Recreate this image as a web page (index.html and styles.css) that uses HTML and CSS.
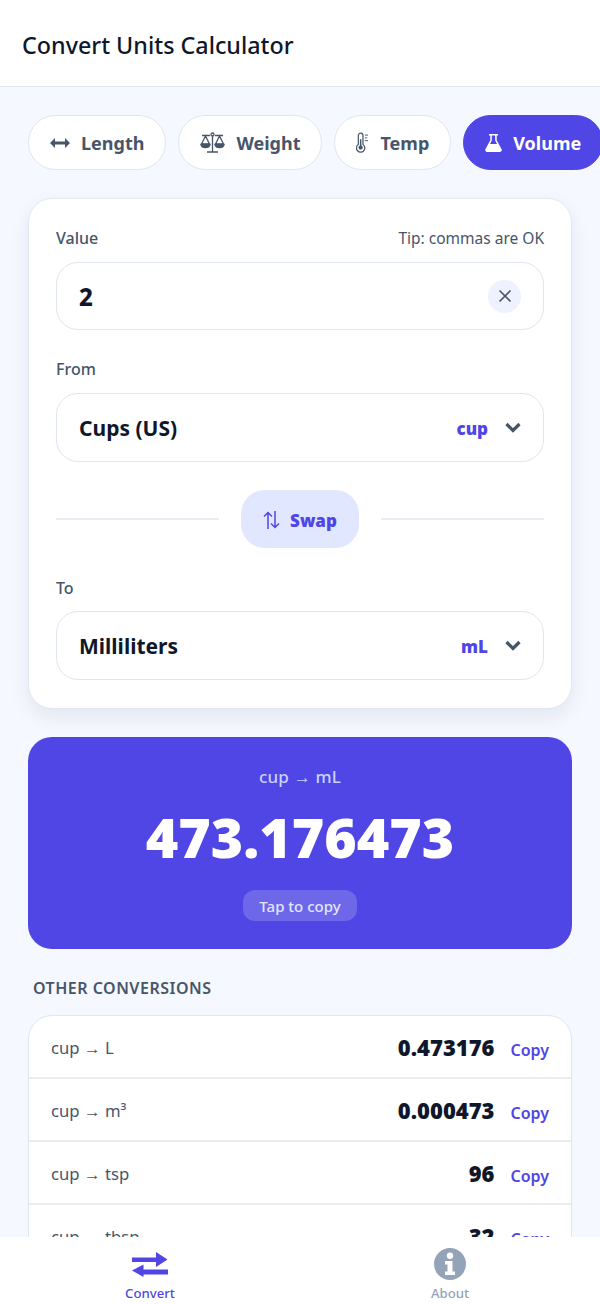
FILE: index.html
```html
<!DOCTYPE html>
<html lang="en">
<head>
    <meta charset="UTF-8" />
    <meta name="viewport" content="width=device-width, initial-scale=1" />
    <title>Convert Units Calculator</title>
    <link rel="stylesheet" href="styles.css">
</head>
<body>
    <div class="app">
        <header class="topbar">
            <h1>Convert Units Calculator</h1>
        </header>

        <main class="content">
            <div class="tabs">
                <a href="#" class="tab">
                    <svg class="tab-icon" width="20" height="12" viewBox="0 0 20 12" fill="currentColor"><path d="M0 6l5-5v3.600h10V1l5 5-5 5V7.400H5V11z"/></svg>
                    Length
                </a>
                <a href="#" class="tab">
                    <svg class="tab-icon" width="25" height="21" viewBox="0 0 25 21" fill="none" stroke="currentColor" stroke-width="1.300"><path d="M12.500 3v16.500M7 20h11M2 3.500h8M15 3.500h8" /><circle cx="12.500" cy="2.500" r="1.500"/><path d="M5.500 4L1.500 12h8zM19.500 4L15.500 12h8z"/><path d="M1 12.500h9c-.4 2-2.200 3-4.500 3s-4.100-1-4.500-3zM15 12.500h9c-.4 2-2.200 3-4.500 3s-4.100-1-4.500-3z" fill="currentColor"/></svg>
                    Weight
                </a>
                <a href="#" class="tab">
                    <svg class="tab-icon" width="13" height="21" viewBox="0 0 14 21" fill="none" stroke="currentColor" stroke-width="1.300"><path d="M2.500 3a2.500 2.500 0 0 1 5 0v9.700a4.500 4.500 0 1 1-5 0z"/><circle cx="5" cy="16" r="2.300" fill="currentColor" stroke="none"/><path d="M5 7v8" stroke-width="1.600"/><path d="M9.500 2.500H13M9.500 5.500H12M9.500 8.500H13" stroke-width="1"/></svg>
                    Temp
                </a>
                <a href="#" class="tab tab-active">
                    <svg class="tab-icon" width="17" height="18" viewBox="0 0 17 18" fill="currentColor"><path d="M4 0h9v1.600h-1.300v4.600L16.500 15a2 2 0 0 1-1.800 3H2.300a2 2 0 0 1-1.800-3L5.300 6.200V1.600H4zM6.800 1.600v5L5 10h7l-1.800-3.400v-5z"/></svg>
                    Volume
                </a>
            </div>

            <section class="card">
                <div class="field-head">
                    <label>Value</label>
                    <span class="tip">Tip: commas are OK</span>
                </div>
                <div class="field field-value">
                    <span class="field-text value-text">2</span>
                    <button class="clear">
                        <svg width="14" height="14" viewBox="0 0 14 14" fill="none" stroke="currentColor" stroke-width="1.600"><path d="M1.500 1.500l11 11M12.500 1.500l-11 11"/></svg>
                    </button>
                </div>

                <div class="field-head field-head-from">
                    <label>From</label>
                </div>
                <div class="field">
                    <span class="field-text">Cups (US)</span>
                    <span class="unit">cup</span>
                    <svg class="chev" width="16" height="11" viewBox="0 0 16 11" fill="none" stroke="currentColor" stroke-width="3.200"><path d="M1.500 2l6.500 6.500L14.500 2"/></svg>
                </div>

                <div class="swap-row">
                    <div class="swap-line"></div>
                    <button class="swap">
                        <svg width="17" height="18" viewBox="0 0 17 18" fill="none" stroke="currentColor" stroke-width="1.500"><path d="M5 18V1.500M1 5.500L5 1.500l4 4M12 0v16.500M8 12.500l4 4 4-4"/></svg>
                        Swap
                    </button>
                    <div class="swap-line"></div>
                </div>

                <div class="field-head field-head-to">
                    <label>To</label>
                </div>
                <div class="field">
                    <span class="field-text">Milliliters</span>
                    <span class="unit">mL</span>
                    <svg class="chev" width="16" height="11" viewBox="0 0 16 11" fill="none" stroke="currentColor" stroke-width="3.200"><path d="M1.500 2l6.500 6.500L14.500 2"/></svg>
                </div>
            </section>

            <section class="result">
                <div class="result-label">cup → mL</div>
                <div class="result-value">473.176473</div>
                <button class="result-copy">Tap to copy</button>
            </section>

            <h2 class="section-title">OTHER CONVERSIONS</h2>
            <section class="list">
                <div class="row">
                    <span class="row-name">cup → L</span>
                    <span class="row-value">0.473176</span>
                    <a href="#" class="row-copy">Copy</a>
                </div>
                <div class="row">
                    <span class="row-name">cup → m³</span>
                    <span class="row-value">0.000473</span>
                    <a href="#" class="row-copy">Copy</a>
                </div>
                <div class="row">
                    <span class="row-name">cup → tsp</span>
                    <span class="row-value">96</span>
                    <a href="#" class="row-copy">Copy</a>
                </div>
                <div class="row">
                    <span class="row-name">cup → tbsp</span>
                    <span class="row-value">32</span>
                    <a href="#" class="row-copy">Copy</a>
                </div>
            </section>
        </main>

        <nav class="bottom-nav">
            <a href="#" class="nav-item nav-active">
                <svg width="36" height="32" viewBox="0 0 36 32" fill="currentColor"><path d="M0 9.500h24V4l11.500 7.500L24 19v-5H0z"/><path d="M36 22H11.500v-5L0 23l11.500 6.500V27H36z" transform="translate(0 -0.500)"/></svg>
                Convert
            </a>
            <a href="#" class="nav-item">
                <svg width="32" height="32" viewBox="0 0 32 32" fill="currentColor"><path fill-rule="evenodd" d="M16 0a16 16 0 1 1 0 32 16 16 0 0 1 0-32zM16 4.500a3.200 3.200 0 1 0 0 6.400 3.200 3.200 0 0 0 0-6.400zM11 13v3.500h2.500v7H11V27h10v-3.500h-2.500V13z"/></svg>
                About
            </a>
        </nav>
    </div>
</body>
</html>
```

FILE: styles.css
```css
* {
    margin: 0;
    padding: 0;
    box-sizing: border-box;
}

body {
    font-family: 'Noto Sans', 'Open Sans', sans-serif;
    background-color: #f5f8ff;
    color: #0f172a;
    overflow: hidden;
}

a {
    text-decoration: none;
    color: inherit;
}

button {
    font-family: inherit;
    border: none;
    cursor: pointer;
}

.app {
    height: 1304px;
    display: flex;
    flex-direction: column;
}

/* Top bar */
.topbar {
    height: 87px;
    flex-shrink: 0;
    background-color: #fff;
    border-bottom: 1px solid #e2e8f0;
    display: flex;
    align-items: center;
    padding: 3px 22px 0;
}

.topbar h1 {
    font-size: 23.3px;
    font-weight: 500;
    color: #0f172a;
}

/* Scrolling area */
.content {
    flex: 1;
    min-height: 0;
    overflow: hidden;
    padding: 28px 28px 0;
}

.tabs {
    display: flex;
    gap: 12px;
    margin-bottom: 28px;
    width: 620px;
}

.tab {
    height: 55px;
    flex-shrink: 0;
    display: flex;
    align-items: center;
    gap: 11px;
    padding: 0 21px;
    background-color: #fff;
    border: 1px solid #dfe6ef;
    border-radius: 28px;
    font-size: 18px;
    font-weight: 700;
    color: #475569;
}

.tab-active {
    background-color: #4f46e5;
    border-color: #4f46e5;
    color: #fff;
}

/* Converter card */
.card {
    background-color: #fff;
    border: 1px solid #e2e8f0;
    border-radius: 24px;
    padding: 27px 27px 28px;
    box-shadow: 0 8px 20px rgba(15, 23, 42, 0.08);
    margin-bottom: 28px;
}

.field-head {
    display: flex;
    justify-content: space-between;
    align-items: center;
    height: 24px;
    margin-bottom: 12px;
    font-size: 16px;
    font-weight: 500;
    color: #475569;
}

.field-head-from {
    margin-top: 27px;
}

.field-head-to {
    margin-bottom: 11px;
}

.tip {
    font-size: 15.500px;
    font-weight: 400;
}

.field {
    height: 69px;
    display: flex;
    align-items: center;
    border: 1px solid #dfe6ef;
    border-radius: 22px;
    padding: 0 22px;
}

.field-value {
    height: 68px;
}

.field-text {
    flex: 1;
    padding-top: 1px;
    font-size: 21px;
    font-weight: 700;
}

.value-text {
    padding-top: 0;
    font-size: 24px;
    font-weight: 800;
}

.clear {
    width: 33px;
    height: 33px;
    border-radius: 50%;
    background-color: #eef2ff;
    color: #475569;
    display: flex;
    align-items: center;
    justify-content: center;
}

.unit {
    font-size: 17px;
    font-weight: 900;
    color: #4f46e5;
    margin-top: 2px;
}

.chev {
    margin-left: 17px;
    color: #475569;
}

.swap-row {
    display: flex;
    align-items: center;
    gap: 22px;
    margin: 28px 0;
}

.swap-line {
    flex: 1;
    height: 2px;
    background-color: #e8edf4;
}

.swap {
    width: 118px;
    height: 58px;
    padding-top: 2px;
    border-radius: 24px;
    background-color: #e0e7ff;
    color: #4f46e5;
    font-size: 17px;
    font-weight: 900;
    display: flex;
    align-items: center;
    justify-content: center;
    gap: 10px;
}

/* Result */
.result {
    height: 212px;
    background-color: #4f46e5;
    border-radius: 24px;
    color: #fff;
    display: flex;
    flex-direction: column;
    align-items: center;
    padding-top: 28px;
    margin-bottom: 24px;
}

.result-label {
    font-size: 17px;
    font-weight: 500;
    letter-spacing: 0.2px;
    color: #c7d2fe;
    height: 24px;
}

.result-value {
    font-size: 55.500px;
    font-weight: 900;
    line-height: 76px;
    margin-top: 10px;
}

.result-copy {
    margin-top: 15px;
    height: 31px;
    padding: 0 16px;
    border-radius: 12px;
    background-color: rgba(255, 255, 255, 0.18);
    color: #e0e7ff;
    font-size: 15px;
    font-weight: 500;
}

/* Other conversions */
.section-title {
    font-size: 16px;
    font-weight: 600;
    color: #475569;
    margin: 0 0 12px 5px;
    line-height: 30px;
    letter-spacing: 0.5px;
}

.list {
    background-color: #fff;
    border: 1px solid #dfe6ef;
    border-radius: 24px;
}

.row {
    height: 63px;
    display: flex;
    align-items: center;
    padding: 0 22px;
    border-bottom: 2px solid #e8edf4;
}

.row-name {
    flex: 1;
    margin-top: 2px;
    font-size: 16.700px;
    color: #475569;
}

.row-value {
    font-size: 22px;
    font-weight: 900;
}

.row-copy {
    margin-left: 16px;
    margin-top: 6px;
    font-size: 16px;
    font-weight: 600;
    color: #4f46e5;
}

/* Bottom navigation */
.bottom-nav {
    height: 67px;
    flex-shrink: 0;
    background-color: #fff;
    display: flex;
}

.nav-item {
    flex: 1;
    display: flex;
    flex-direction: column;
    align-items: center;
    padding-top: 11px;
    gap: 4px;
    font-size: 13.200px;
    line-height: 18px;
    font-weight: 500;
    color: #94a3b8;
}

.nav-active {
    color: #4f46e5;
}
```
